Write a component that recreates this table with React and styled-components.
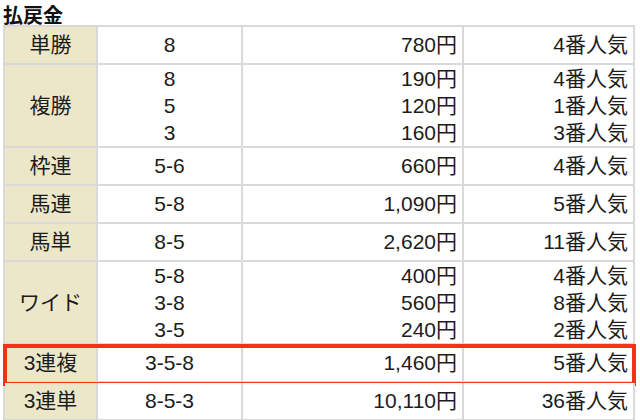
import React from 'react'
import styled, { createGlobalStyle } from 'styled-components'

const Global = createGlobalStyle`
  body {
    margin: 0;
    background: #fff;
    font-family: "Liberation Sans", "Noto Sans CJK JP", sans-serif;
    color: #1c1c1c;
  }
`;

const Wrap = styled.div`
  width: 640px;
  padding: 0 5px 0 3px;
  box-sizing: border-box;
`;

const Title = styled.h2`
  margin: 0;
  height: 25px;
  padding: 5px 0 0 0;
  box-sizing: border-box;
  font-family: "Noto Sans CJK JP", sans-serif;
  font-size: 20px;
  line-height: 20px;
  font-weight: 700;
  color: #111;
`;

const Table = styled.div`
  border-top: 2px solid #d9d9d9;
  border-left: 2px solid #d9d9d9;
`;

const Row = styled.div`
  position: relative;
  display: grid;
  grid-template-columns: 93px 145px 221px 171px;

  ${({ $highlight }) => $highlight && `
    &::after {
      content: '';
      position: absolute;
      top: -1px;
      left: -2px;
      right: -1px;
      bottom: -3px;
      border: 4px solid #f5301c;
      pointer-events: none;
    }
  `}
`;

const Cell = styled.div`
  display: flex;
  flex-direction: column;
  justify-content: center;
  align-items: ${({ $align }) => $align || 'center'};
  padding: 0 ${({ $align }) => ($align === 'flex-end' ? '5px' : '0')};
  border-right: 2px solid #d9d9d9;
  border-bottom: 2px solid #d9d9d9;
  background: ${({ $head }) => ($head ? '#ece7c9' : '#fff')};
  font-size: 21px;
`;

const Line = styled.div`
  line-height: ${({ $dense }) => ($dense ? '27px' : '36px')};
  white-space: nowrap;
`;

const rows = [
  { label: '単勝', items: [['8', '780円', '4番人気']] },
  { label: '複勝', items: [['8', '190円', '4番人気'], ['5', '120円', '1番人気'], ['3', '160円', '3番人気']] },
  { label: '枠連', items: [['5-6', '660円', '4番人気']] },
  { label: '馬連', items: [['5-8', '1,090円', '5番人気']] },
  { label: '馬単', items: [['8-5', '2,620円', '11番人気']] },
  { label: 'ワイド', items: [['5-8', '400円', '4番人気'], ['3-8', '560円', '8番人気'], ['3-5', '240円', '2番人気']] },
  { label: '3連複', items: [['3-5-8', '1,460円', '5番人気']], highlight: true },
  { label: '3連単', items: [['8-5-3', '10,110円', '36番人気']] },
];

function Column({ items, index, align }) {
  const dense = items.length > 1;
  return (
    <Cell $align={align}>
      {items.map((it, i) => (
        <Line key={i} $dense={dense}>{it[index]}</Line>
      ))}
    </Cell>
  );
}

export default function App() {
  return (
    <Wrap>
      <Global />
      <Title>払戻金</Title>
      <Table>
        {rows.map((r) => (
          <Row key={r.label} $highlight={r.highlight}>
            <Cell $head>
              <Line>{r.label}</Line>
            </Cell>
            <Column items={r.items} index={0} />
            <Column items={r.items} index={1} align="flex-end" />
            <Column items={r.items} index={2} align="flex-end" />
          </Row>
        ))}
      </Table>
    </Wrap>
  );
}
